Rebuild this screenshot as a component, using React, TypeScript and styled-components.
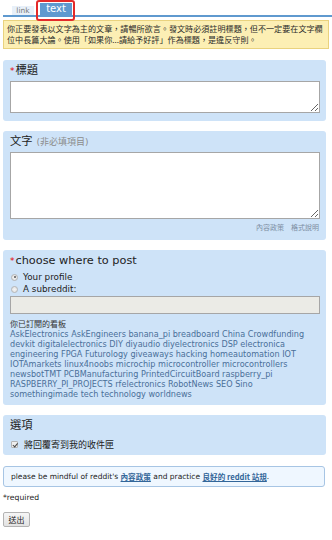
import React from "react";
import styled, { createGlobalStyle } from "styled-components";

const FONT = `"DejaVu Sans", "Noto Sans CJK TC", sans-serif`;

const Global = createGlobalStyle`
  html, body { margin: 0; padding: 0; background: #fff; }
  body { font-family: ${FONT}; color: #222; }
  * { box-sizing: border-box; }
`;

const Page = styled.div`
  width: 332px;
  padding: 0 0 0 3px;
`;

const TabMenu = styled.div`
  position: relative;
  display: flex;
  align-items: flex-end;
  gap: 6px;
  height: 17px;
  padding-left: 9px;
  border-bottom: 2px solid #5f99cf;
`;

const Tab = styled.a<{ $selected?: boolean }>`
  display: block;
  text-align: center;
  text-decoration: none;
  font-family: ${FONT};
  white-space: nowrap;
  ${(p) =>
    p.$selected
      ? `
    width: 32px; height: 12px; line-height: 11px;
    background: #5f99cf; color: #fff; font-size: 10px;
  `
      : `
    width: 22px; height: 9px; line-height: 9px;
    background: #e8f0f9; color: #7a7a7a; font-size: 7.5px;
  `}
`;

const Highlight = styled.span`
  position: absolute;
  left: 33px;
  top: 0;
  width: 39px;
  height: 21px;
  border: 2px solid #e32a2a;
  border-radius: 3px;
  pointer-events: none;
`;

const InfoBar = styled.div`
  margin: 3px 3px 0 0;
  padding: 2px 3px 3px;
  background: #fcefb4;
  border: 1px solid #e9d27e;
  font-family: "Noto Sans CJK TC", sans-serif;
  font-size: 8.1px;
  line-height: 11px;
  color: #2a2a2a;
`;

const InfoLine = styled.span`
  display: block;
  white-space: nowrap;
`;

const Box = styled.div<{ $gap?: number; $pb?: number }>`
  margin: ${(p) => p.$gap ?? 10}px 6px 0 0;
  padding: 4px 7px ${(p) => p.$pb ?? 8}px;
  background: #cee3f8;
  border-radius: 3px;
`;

const Label = styled.div`
  display: flex;
  align-items: baseline;
  height: 14px;
  line-height: 14px;
  font-size: 11.3px;
  color: #222;
  white-space: nowrap;
`;

const Req = styled.span`
  color: #e60000;
  font-size: 9px;
  margin-right: 1px;
`;

const Little = styled.span`
  color: #8c8c8c;
  font-size: 9px;
  margin-left: 4px;
`;

const Area = styled.textarea<{ $h: number }>`
  display: block;
  width: 310px;
  height: ${(p) => p.$h}px;
  margin-top: 3px;
  border: 1px solid #a6a6a6;
  background: #fff;
  font-family: ${FONT};
  font-size: 9px;
  padding: 2px;
`;

const HelpLinks = styled.div`
  display: flex;
  justify-content: flex-end;
  gap: 7px;
  margin-top: 3px;
  height: 10px;
  line-height: 10px;
  font-family: "Noto Sans CJK TC", sans-serif;
  font-size: 7px;
  color: #7d8ea3;
`;

const Option = styled.label`
  display: flex;
  align-items: center;
  height: 12px;
  font-size: 8.8px;
  color: #222;
  white-space: nowrap;
`;

const Radio = styled.input.attrs({ type: "radio" })`
  appearance: none;
  margin: 0 5px 0 1px;
  width: 7px;
  height: 7px;
  border-radius: 50%;
  border: 1px solid #b5b5b5;
  background: radial-gradient(circle, #f4f4f4 0%, #dedede 100%);
  position: relative;
  &:checked::after {
    content: "";
    position: absolute;
    left: 1.5px;
    top: 1.5px;
    width: 2px;
    height: 2px;
    border-radius: 50%;
    background: #555;
  }
`;

const Check = styled.input.attrs({ type: "checkbox" })`
  appearance: none;
  margin: 0 6px 0 1px;
  width: 7px;
  height: 7px;
  border: 1px solid #b5b5b5;
  border-radius: 1px;
  background: #eee;
  position: relative;
  &:checked::after {
    content: "";
    position: absolute;
    left: 1.5px;
    top: 0px;
    width: 1.5px;
    height: 3.5px;
    border: solid #444;
    border-width: 0 1px 1px 0;
    transform: rotate(40deg);
  }
`;

const SrInput = styled.input`
  display: block;
  width: 310px;
  height: 18px;
  margin-top: 1px;
  border: 1px solid #a6a6a6;
  background: #ebebe6;
`;

const SubHead = styled.div`
  margin-top: 5px;
  height: 10px;
  line-height: 10px;
  font-family: "Noto Sans CJK TC", sans-serif;
  font-size: 8px;
  color: #333;
`;

const SrList = styled.div`
  font-size: 8.1px;
  line-height: 10px;
`;

const SrLine = styled.div`
  white-space: nowrap;
`;

const SrLink = styled.a`
  color: #4a6f99;
  text-decoration: none;
`;

const OptionRow = styled(Option)`
  margin-top: 5px;
  font-family: "Noto Sans CJK TC", sans-serif;
  font-size: 9px;
`;

const Notice = styled.div`
  margin: 11px 7px 0 0;
  height: 21px;
  padding: 0 7px;
  display: flex;
  align-items: center;
  background: #eff7ff;
  border: 1px solid #a7c5e4;
  border-radius: 3px;
  font-size: 7.5px;
  color: #222;
  white-space: nowrap;
`;

const NoticeLink = styled.a`
  color: #336699;
  text-decoration: underline;
  font-family: "Noto Sans CJK TC", "DejaVu Sans", sans-serif;
  font-size: 7.6px;
  font-weight: bold;
`;

const Required = styled.div`
  margin-top: 6px;
  height: 10px;
  line-height: 10px;
  font-size: 7.7px;
  color: #222;
`;

const Submit = styled.button`
  display: block;
  margin-top: 9px;
  width: 27px;
  height: 15px;
  padding: 0;
  font-family: "Noto Sans CJK TC", sans-serif;
  font-size: 8px;
  color: #222;
  background: linear-gradient(#f6f6f6, #e2e2e2);
  border: 1px solid #b3b3b3;
  border-radius: 2px;
`;

const lines: string[][] = [
  ["AskElectronics", "AskEngineers", "banana_pi", "breadboard", "China", "Crowdfunding"],
  ["devkit", "digitalelectronics", "DIY", "diyaudio", "diyelectronics", "DSP", "electronica"],
  ["engineering", "FPGA", "Futurology", "giveaways", "hacking", "homeautomation", "IOT"],
  ["IOTAmarkets", "linux4noobs", "microchip", "microcontroller", "microcontrollers"],
  ["newsbotTMT", "PCBManufacturing", "PrintedCircuitBoard", "raspberry_pi"],
  ["RASPBERRY_PI_PROJECTS", "rfelectronics", "RobotNews", "SEO", "Sino"],
  ["somethingimade", "tech", "technology", "worldnews"],
];

export default function App() {
  return (
    <Page>
      <Global />
      <TabMenu>
        <Tab href="#">link</Tab>
        <Tab href="#" $selected>
          text
        </Tab>
        <Highlight />
      </TabMenu>
      <InfoBar>
        <InfoLine>你正要發表以文字為主的文章，請暢所欲言。發文時必須註明標題，但不一定要在文字欄</InfoLine>
        <InfoLine>位中長篇大論。使用「如果你...請給予好評」作為標題，是違反守則。</InfoLine>
      </InfoBar>

      <Box $gap={11}>
        <Label>
          <Req>*</Req>標題
        </Label>
        <Area $h={32} />
      </Box>

      <Box $gap={10}>
        <Label>
          文字<Little>(非必填項目)</Little>
        </Label>
        <Area $h={67} />
        <HelpLinks>
          <span>內容政策</span>
          <span>格式說明</span>
        </HelpLinks>
      </Box>

      <Box $gap={10} $pb={6}>
        <Label>
          <Req>*</Req>choose where to post
        </Label>
        <Option style={{ marginTop: 3 }}>
          <Radio name="where" defaultChecked />
          Your profile
        </Option>
        <Option>
          <Radio name="where" />
          A subreddit:
        </Option>
        <SrInput />
        <SubHead>你已訂閱的看板</SubHead>
        <SrList>
          {lines.map((l, i) => (
            <SrLine key={i}>
              {l.map((n, j) => (
                <React.Fragment key={n}>
                  <SrLink href="#">{n}</SrLink>
                  {j < l.length - 1 ? " " : ""}
                </React.Fragment>
              ))}
            </SrLine>
          ))}
        </SrList>
      </Box>

      <Box $gap={10} $pb={5}>
        <Label>選項</Label>
        <OptionRow>
          <Check defaultChecked />
          將回覆寄到我的收件匣
        </OptionRow>
      </Box>

      <Notice>
        please be mindful of reddit's&nbsp;<NoticeLink href="#">內容政策</NoticeLink>&nbsp;and practice&nbsp;
        <NoticeLink href="#">良好的 reddit 站規</NoticeLink>.
      </Notice>

      <Required>*required</Required>
      <Submit>送出</Submit>
    </Page>
  );
}
